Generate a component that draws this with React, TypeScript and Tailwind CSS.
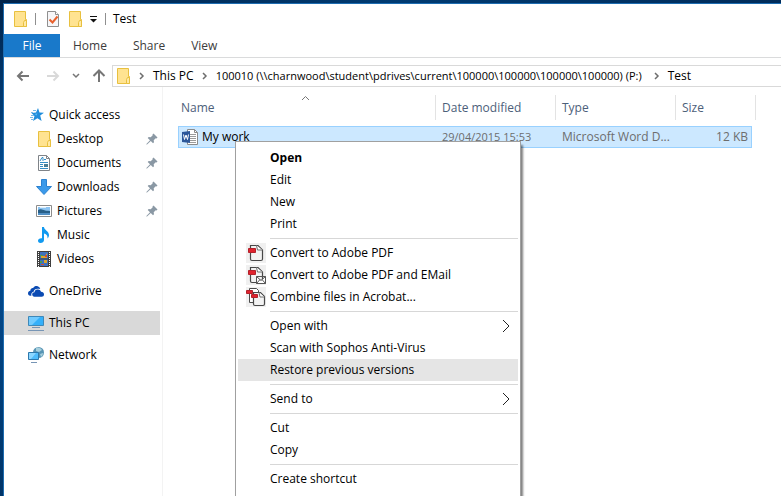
import React from 'react';

const FolderIcon = () => (
  <svg width="16" height="18" viewBox="0 0 16 18" className="shrink-0">
    <path d="M2.5 1.5h11v8h1v7h-12z" fill="#ffe391" stroke="#e8c03f" />
    <path d="M11.5 16.5v-4l1-2h2v6z" fill="#ffe9a6" stroke="#e8c03f" />
  </svg>
);

const PropertiesIcon = () => (
  <svg width="16" height="18" viewBox="0 0 16 18" className="shrink-0">
    <path d="M2.5 1.5h8l3 3v12h-11z" fill="#f6f6f8" stroke="#8f8f8f" />
    <path d="M10.5 1.5v3h3" fill="#fff" stroke="#8f8f8f" />
    <path d="M4.5 9.5l3 3 5-6" fill="none" stroke="#e8602c" strokeWidth="2" />
  </svg>
);

const StarIcon = () => (
  <svg width="16" height="16" viewBox="0 0 16 16" className="shrink-0">
    <path d="M10 1l1.500 4.400 4.500.3-3.800 2.900 1.400 5.400-4.200-2.800L5 14l1.500-5L3.500 6l4.500-.4z" fill="#1f8ddb" />
    <path d="M9.800 4l-.8 2.600-2.500.3L8.800 8.500l-.6 2z" fill="#5cbcf3" />
    <path d="M5 3.500h3M3 5.500h2M3 8.500h3M2 10.500h3M3 12.500h2" stroke="#74bbe8" />
  </svg>
);

const DocumentIcon = () => (
  <svg width="16" height="18" viewBox="0 0 16 18" className="shrink-0">
    <path d="M2.5 1.5h8l3 3v12h-11z" fill="#fff" stroke="#7f8388" />
    <path d="M10.5 1.5v3h3" fill="none" stroke="#7f8388" />
    <path d="M4 7l2-3.500h1V7M8 5.500h2M4 8.500h8M4 10.500h3M4 12.500h3M4 14.500h8" fill="none" stroke="#358ec6" />
    <path d="M8 10h4v3H8z" fill="#4b7d94" />
  </svg>
);

const DownloadIcon = () => (
  <svg width="16" height="16" viewBox="0 0 16 16" className="shrink-0">
    <path d="M5.500.5h5v7h5L8 15.500.5 7.500h5z" fill="#3b9aea" stroke="#2c82d0" />
  </svg>
);

const PictureIcon = () => (
  <svg width="16" height="16" viewBox="0 0 16 16" className="shrink-0">
    <path d="M.5 2.500h15v11H.5z" fill="#fff" stroke="#8c8c8c" />
    <path d="M2 4h12v8H2z" fill="#8cc4f2" />
    <path d="M2 7c3-2 5 1 12 1v2H2z" fill="#285f88" />
    <path d="M2 10h12v2H2z" fill="#4f8ec4" />
    <path d="M4 4.500h6" stroke="#d9edfb" />
  </svg>
);

const MusicIcon = () => (
  <svg width="16" height="16" viewBox="0 0 16 16" className="shrink-0">
    <path d="M6 0h2c0 3 5 4 5 8 0 1.500-.6 2.600-1.500 3.500C11.800 8 10 7.200 8 6.500V13c0 1.800-1.600 3-3.500 3S2 15 2 13.600C2 12 3.600 11 6 11.200z" fill="#129af0" />
  </svg>
);

const VideoIcon = () => (
  <svg width="16" height="16" viewBox="0 0 16 16" className="shrink-0">
    <path d="M1 0h14v16H1z" fill="#3e3e3e" />
    <path d="M4 1h8v6.500H4zM4 8.500h8V15H4z" fill="#3f70bd" />
    <path d="M5 5h4l2-3v5H5zM8 9h3v3H8z" fill="#d9a32c" />
    <path d="M9 4h2v2H9zM5 13h3v1H5z" fill="#d84a2c" />
    <path d="M4 4h3v1H4zM4 10h2v2H4z" fill="#4a9a52" />
    <path d="M2.500 1v15M13.500 1v15" stroke="#fff" strokeDasharray="1 1" />
  </svg>
);

const OneDriveIcon = () => (
  <svg width="16" height="16" viewBox="0 0 16 16" className="shrink-0">
    <path d="M0 10.500C0 8.700 1.200 7.800 2.300 7.700 2.400 5.500 4 4.700 5.200 5 6.300 3 8.200 2.700 9.600 3.200c1.500.4 2.300 1.500 2.600 2.800-4.200-1-6 .3-6.600 2.700C3.500 9 3 11 3.400 12.800H2.200C.8 12.600 0 11.700 0 10.500z" fill="#0b4bb3" />
    <path d="M4.200 11.600c0-1.500 1-2.300 2.300-2.300C6.800 7.200 8.200 6.300 9.800 6.600c1-.2 2.700.4 3.200 2.200 1.800 0 3 1 3 2.700 0 1.300-1 2.300-2.300 2.300H6.400c-1.300 0-2.200-1-2.200-2.200z" fill="#0b4bb3" />
  </svg>
);

const ComputerIcon = () => (
  <svg width="16" height="16" viewBox="0 0 16 16" className="shrink-0">
    <path d="M.5 1.500h15v9H.5z" fill="#35b0fa" stroke="#3e88b8" />
    <path d="M1 2h11L4 10H1z" fill="#72cbff" />
    <path d="M4 12.500h8M0 15.500h16" stroke="#7795b5" />
  </svg>
);

const NetworkIcon = () => (
  <svg width="16" height="16" viewBox="0 0 16 16" className="shrink-0">
    <circle cx="10.500" cy="5.500" r="5.500" fill="#5794b4" />
    <path d="M8 1c2-1 5 0 6 2l-3 2-3-1zM12 7l3-1c0 2-1 3-2 4z" fill="#a7cfdd" />
    <path d="M.5 5.500h10v7H.5z" fill="#4fbcfb" stroke="#2d78ac" />
    <path d="M1 6h7l-5 6H1z" fill="#8cd6ff" />
    <path d="M3 15.500h6" stroke="#7795b5" />
  </svg>
);

const PinIcon = () => (
  <svg width="12" height="12" viewBox="0 0 12 12" className="shrink-0">
    <path d="M7.500.5l4 4-1 1-.8-.2-2 2 .3 2-1 1L4.800 8 1 11.500H.4V11L4 7.200 1.700 5l1-1 2 .3 2-2-.2-.8z" fill="#8a98a4" />
  </svg>
);

const WordIcon = () => (
  <svg width="16" height="16" viewBox="0 0 16 16" className="shrink-0">
    <path d="M5.500.5h7l3 3v12h-10z" fill="#fff" stroke="#8b8b8b" />
    <path d="M12.500.5v3h3" fill="none" stroke="#8b8b8b" />
    <path d="M8 5.500h6M8 7.500h6M8 9.500h6M8 11.500h6M8 13.500h6" stroke="#9b9b9b" />
    <path d="M0 3l8-1v12l-8-1z" fill="#2b579a" />
    <path d="M1.500 5.500l1 5L4 6l1.500 4.500 1-5" fill="none" stroke="#fff" />
  </svg>
);

const PdfIcon = ({ kind }: { kind: string }) => (
  <svg width="20" height="20" viewBox="0 0 20 20" className="shrink-0 bg-[#f0f0f0]">
    {kind === 'combine' ? (
      <g>
        <path d="M3.500 1.500h7l2 2v12h-9z" fill="#fff" stroke="#4c4c4c" />
        <path d="M.5 3.500h6v3h-6z" fill="#e0232e" stroke="#b3222b" />
        <path d="M7.500 5.500h7l4 4v7.500q0 1.500-1.500 1.500H9q-1.500 0-1.500-1.500z" fill="#f3f3f3" stroke="#484848" strokeWidth="1.200" />
        <path d="M13 5.500l1 4.500h4.500" fill="#fff" stroke="#707070" />
        <path d="M5.500 7.500h6v3h-6z" fill="#e0232e" stroke="#b3222b" />
      </g>
    ) : (
      <g>
        <path d="M4.500 2.500h7.500l4.500 4.500v9q0 1.500-1.500 1.500H6q-1.500 0-1.500-1.500z" fill="#f3f3f3" stroke="#484848" strokeWidth="1.200" />
        <path d="M10.500 2.500l1 4.500h5" fill="#fff" stroke="#707070" />
        <path d="M2.500 5.500h7v4h-7z" fill="#e0232e" stroke="#b3222b" />
      </g>
    )}
    {kind === 'mail' && (
      <path d="M10.500 11.500h9v7h-9zl4.500 4 4.500-4M10.500 18.500l3.500-4M19.500 18.500l-3.500-4" fill="#fff" stroke="#555" />
    )}
  </svg>
);

const Crumb = () => (
  <svg width="6" height="8" viewBox="0 0 6 8" className="shrink-0">
    <path d="M1 1l3 3-3 3" fill="none" stroke="#6e6e6e" strokeWidth="1.500" />
  </svg>
);

interface Place {
  label: string;
  icon: React.ReactNode;
  pinned?: boolean;
  sub?: boolean;
  active?: boolean;
}

const places: Place[][] = [
  [
    { label: 'Quick access', icon: <StarIcon /> },
    { label: 'Desktop', icon: <FolderIcon />, sub: true, pinned: true },
    { label: 'Documents', icon: <DocumentIcon />, sub: true, pinned: true },
    { label: 'Downloads', icon: <DownloadIcon />, sub: true, pinned: true },
    { label: 'Pictures', icon: <PictureIcon />, sub: true, pinned: true },
    { label: 'Music', icon: <MusicIcon />, sub: true },
    { label: 'Videos', icon: <VideoIcon />, sub: true },
  ],
  [{ label: 'OneDrive', icon: <OneDriveIcon /> }],
  [{ label: 'This PC', icon: <ComputerIcon />, active: true }],
  [{ label: 'Network', icon: <NetworkIcon /> }],
];

interface MenuEntry {
  label: string;
  icon?: string;
  bold?: boolean;
  submenu?: boolean;
  active?: boolean;
}

const menu: MenuEntry[][] = [
  [{ label: 'Open', bold: true }, { label: 'Edit' }, { label: 'New' }, { label: 'Print' }],
  [
    { label: 'Convert to Adobe PDF', icon: 'pdf' },
    { label: 'Convert to Adobe PDF and EMail', icon: 'mail' },
    { label: 'Combine files in Acrobat...', icon: 'combine' },
  ],
  [
    { label: 'Open with', submenu: true },
    { label: 'Scan with Sophos Anti-Virus' },
    { label: 'Restore previous versions', active: true },
  ],
  [{ label: 'Send to', submenu: true }],
  [{ label: 'Cut' }, { label: 'Copy' }],
  [{ label: 'Create shortcut' }],
];

const TitleBar = () => (
  <header className="flex h-[30px] items-center pl-2">
    <FolderIcon />
    <span className="ml-[7px] h-3 w-px bg-[#8f8f8f]" />
    <button aria-label="Properties" className="ml-[9px]"><PropertiesIcon /></button>
    <button aria-label="New folder" className="ml-[6px]"><FolderIcon /></button>
    <button aria-label="Customize Quick Access Toolbar" className="ml-[6px]">
      <svg width="9" height="8" viewBox="0 0 9 8">
        <path d="M1 1.500h7" stroke="#111" />
        <path d="M1 4h7L4.500 7.500z" fill="#111" />
      </svg>
    </button>
    <span className="ml-[7px] h-3 w-px bg-[#8f8f8f]" />
    <h1 className="ml-[7px]">Test</h1>
  </header>
);

const Ribbon = () => (
  <div className="flex h-6 border-b border-[#dadbdc] text-[#3c3c3c]">
    <button className="w-14 bg-[#1979ca] text-white">File</button>
    <button className="px-[13px]">Home</button>
    <button className="px-[13px]">Share</button>
    <button className="px-[13px]">View</button>
  </div>
);

const AddressBar = () => (
  <div className="flex pt-[7px]">
    <div className="flex w-[108px] shrink-0 items-center pl-3 text-[#767676]">
      <button aria-label="Back">
        <svg width="14" height="12" viewBox="0 0 14 12">
          <path d="M13 6H2M6.500 1.500L2 6l4.500 4.500" fill="none" stroke="currentColor" strokeWidth="2" />
        </svg>
      </button>
      <button aria-label="Forward" className="ml-4 text-[#d9d9d9]">
        <svg width="14" height="12" viewBox="0 0 14 12">
          <path d="M1 6h11M7.500 1.500L12 6l-4.500 4.500" fill="none" stroke="currentColor" strokeWidth="2" />
        </svg>
      </button>
      <button aria-label="Recent locations" className="ml-3">
        <svg width="8" height="6" viewBox="0 0 8 6">
          <path d="M1 1l3 3 3-3" fill="none" stroke="currentColor" strokeWidth="1.500" />
        </svg>
      </button>
      <button aria-label="Up" className="ml-3">
        <svg width="14" height="14" viewBox="0 0 14 14">
          <path d="M7 13V2M1.500 7L7 1.500 12.500 7" fill="none" stroke="currentColor" strokeWidth="2" />
        </svg>
      </button>
    </div>
    <nav aria-label="Address" className="flex h-[22px] min-w-0 flex-1 items-center whitespace-nowrap border border-r-0 border-[#d9d9d9] pl-[2px]">
      <FolderIcon />
      <span className="ml-2"><Crumb /></span>
      <button className="ml-2">This PC</button>
      <span className="ml-2"><Crumb /></span>
      <button className="ml-2 text-[11px]">100010 (\\charnwood\student\pdrives\current\100000\100000\100000\100000) (P:)</button>
      <span className="ml-3"><Crumb /></span>
      <button className="ml-2">Test</button>
    </nav>
  </div>
);

const Sidebar = () => (
  <nav aria-label="Places" className="w-[159px] shrink-0 border-r border-[#f3f3f3] pt-4">
    {places.map((group, i) => (
      <ul key={i} className="mb-2">
        {group.map((place) => (
          <li key={place.label}>
            <a
              href="#"
              className={`mr-[2px] flex h-6 items-center gap-[5px] pr-[2px] ${place.sub ? 'pl-8' : 'pl-6'} ${place.active ? 'bg-[#d9d9d9]' : ''}`}
            >
              {place.icon}
              <span className="flex-1">{place.label}</span>
              {place.pinned && <PinIcon />}
            </a>
          </li>
        ))}
      </ul>
    ))}
  </nav>
);

const FileList = () => (
  <main className="min-w-0 flex-1 pl-[15px] pt-2">
    <table className="w-[578px] table-fixed border-separate border-spacing-0 text-left">
      <colgroup>
        <col className="w-[258px]" />
        <col className="w-[120px]" />
        <col className="w-[120px]" />
        <col className="w-[76px]" />
        <col className="w-1" />
      </colgroup>
      <thead className="text-[#4c607a]">
        <tr>
          <th className="relative p-0 pb-[6px] font-normal">
            <div className="flex h-[25px] items-center border-r border-[#e3e3e3] pl-[3px]">Name</div>
            <svg width="9" height="6" viewBox="0 0 9 6" className="absolute left-[123px] top-0">
              <path d="M1 5l3.500-3.500L8 5" fill="none" stroke="#777" />
            </svg>
          </th>
          <th className="p-0 pb-[6px] font-normal">
            <div className="flex h-[25px] items-center border-r border-[#e3e3e3] pl-[6px]">Date modified</div>
          </th>
          <th className="p-0 pb-[6px] font-normal">
            <div className="flex h-[25px] items-center border-r border-[#e3e3e3] pl-[6px]">Type</div>
          </th>
          <th colSpan={2} className="p-0 pb-[6px] font-normal">
            <div className="flex h-[25px] items-center border-r border-[#e3e3e3] pl-[6px]">Size</div>
          </th>
        </tr>
      </thead>
      <tbody>
        <tr className="h-[22px] whitespace-nowrap text-[#6d6d6d]">
          <td className="border-y border-l border-[#99d1ff] bg-[#cce8ff] p-0 pl-[3px] text-black">
            <div className="flex items-center gap-1"><WordIcon />My work</div>
          </td>
          <td className="border-y border-[#99d1ff] bg-[#cce8ff] p-0 pl-[6px] text-[11px]">29/04/2015 15:53</td>
          <td className="border-y border-[#99d1ff] bg-[#cce8ff] p-0 pl-[6px]">Microsoft Word D...</td>
          <td className="border-y border-r border-[#99d1ff] bg-[#cce8ff] p-0 pr-[3px] text-right">12 KB</td>
          <td className="p-0" />
        </tr>
      </tbody>
    </table>
  </main>
);

const ContextMenu = () => (
  <div
    role="menu"
    className="absolute left-[235px] top-[141px] w-[286px] border border-[#a0a0a0] bg-white px-[2px] pb-8 pt-[5px] shadow-[2px_4px_2px_rgba(0,0,0,0.5)]"
  >
    {menu.map((group, i) => (
      <div key={i}>
        {i > 0 && <hr className="my-[3px] ml-8 border-[#d7d7d7]" />}
        {group.map((entry) => (
          <button
            key={entry.label}
            role="menuitem"
            className={`flex h-[22px] w-full items-center pr-2 text-left ${entry.active ? 'bg-[#e5e5e5]' : ''} ${entry.bold ? 'font-bold' : ''}`}
          >
            <span className="flex w-8 shrink-0 pl-2">{entry.icon && <PdfIcon kind={entry.icon} />}</span>
            <span className="flex-1">{entry.label}</span>
            {entry.submenu && (
              <svg width="8" height="14" viewBox="0 0 8 14">
                <path d="M1 1l6 6-6 6" fill="none" stroke="#222" />
              </svg>
            )}
          </button>
        ))}
      </div>
    ))}
  </div>
);

export default function App() {
  return (
    <div className="relative flex h-screen overflow-hidden bg-linear-to-b from-[#00234a] via-[#07529a] via-40% to-[#003468] pl-[3px] font-['Open_Sans','Noto_Sans',sans-serif] text-[12px] leading-4 text-black">
      <div className="flex min-w-0 flex-1 flex-col">
        <div className="h-[3px] shrink-0 bg-linear-to-r from-[#00234a] via-[#003b72] to-[#002c5a]" />
        <div className="flex flex-1 flex-col border-l border-t border-[#1d6cb0] bg-white">
          <TitleBar />
          <Ribbon />
          <AddressBar />
          <div className="flex flex-1">
            <Sidebar />
            <FileList />
          </div>
        </div>
      </div>
      <ContextMenu />
    </div>
  );
}
